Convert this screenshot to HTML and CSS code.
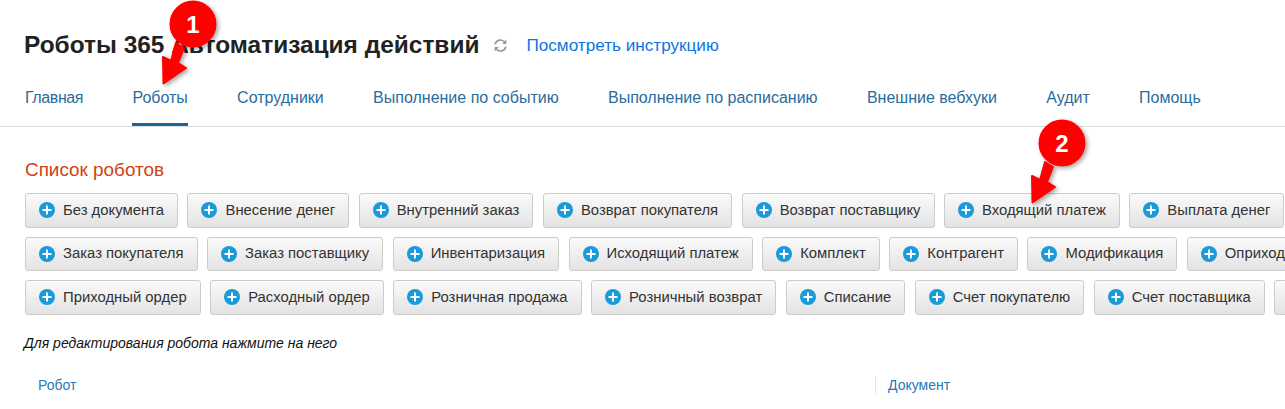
FILE: index.html
```html
<!DOCTYPE html>
<html lang="ru">
<head>
<meta charset="utf-8">
<title>Роботы 365</title>
<link rel="stylesheet" href="styles.css">
</head>
<body>
<svg width="0" height="0" class="defs"><defs>
<symbol id="plus" viewBox="0 0 16 16"><circle cx="8" cy="8" r="8" fill="#1b9ad9"/><path d="M8 3.5v9M3.5 8h9" stroke="#fff" stroke-width="2"/></symbol>
</defs></svg>
<header class="head">
  <div class="title-row">
    <h1 class="title">Роботы 365 Автоматизация действий</h1>
    <svg class="sync" viewBox="0 0 14 14" width="15" height="15"><path d="M2 6a5 5 0 0 1 9-2M12 8a5 5 0 0 1-9 2" fill="none" stroke="#999" stroke-width="1.6"/><path d="M12.5 1.5v4h-4zM1.5 12.5v-4h4z" fill="#999"/></svg>
    <a class="guide">Посмотреть инструкцию</a>
  </div>
  <nav class="nav">
    <a class="tab tab-first">Главная</a>
    <a class="tab active">Роботы</a>
    <a class="tab">Сотрудники</a>
    <a class="tab">Выполнение по событию</a>
    <a class="tab">Выполнение по расписанию</a>
    <a class="tab">Внешние вебхуки</a>
    <a class="tab">Аудит</a>
    <a class="tab">Помощь</a>
  </nav>
</header>
<main class="content">
  <h2 class="list-title">Список роботов</h2>
  <div class="rows">
    <div class="row">
      <button class="btn"><svg class="ic"><use href="#plus"/></svg>Без документа</button>
      <button class="btn"><svg class="ic"><use href="#plus"/></svg>Внесение денег</button>
      <button class="btn"><svg class="ic"><use href="#plus"/></svg>Внутренний заказ</button>
      <button class="btn"><svg class="ic"><use href="#plus"/></svg>Возврат покупателя</button>
      <button class="btn"><svg class="ic"><use href="#plus"/></svg>Возврат поставщику</button>
      <button class="btn"><svg class="ic"><use href="#plus"/></svg>Входящий платеж</button>
      <button class="btn"><svg class="ic"><use href="#plus"/></svg>Выплата денег</button>
    </div>
    <div class="row">
      <button class="btn"><svg class="ic"><use href="#plus"/></svg>Заказ покупателя</button>
      <button class="btn"><svg class="ic"><use href="#plus"/></svg>Заказ поставщику</button>
      <button class="btn"><svg class="ic"><use href="#plus"/></svg>Инвентаризация</button>
      <button class="btn"><svg class="ic"><use href="#plus"/></svg>Исходящий платеж</button>
      <button class="btn"><svg class="ic"><use href="#plus"/></svg>Комплект</button>
      <button class="btn"><svg class="ic"><use href="#plus"/></svg>Контрагент</button>
      <button class="btn"><svg class="ic"><use href="#plus"/></svg>Модификация</button>
      <button class="btn"><svg class="ic"><use href="#plus"/></svg>Оприходование</button>
    </div>
    <div class="row">
      <button class="btn"><svg class="ic"><use href="#plus"/></svg>Приходный ордер</button>
      <button class="btn"><svg class="ic"><use href="#plus"/></svg>Расходный ордер</button>
      <button class="btn"><svg class="ic"><use href="#plus"/></svg>Розничная продажа</button>
      <button class="btn"><svg class="ic"><use href="#plus"/></svg>Розничный возврат</button>
      <button class="btn"><svg class="ic"><use href="#plus"/></svg>Списание</button>
      <button class="btn"><svg class="ic"><use href="#plus"/></svg>Счет покупателю</button>
      <button class="btn"><svg class="ic"><use href="#plus"/></svg>Счет поставщика</button>
      <button class="btn btn-cut"></button>
    </div>
  </div>
  <p class="hint">Для редактирования робота нажмите на него</p>
  <div class="table-head">
    <div class="col col-robot">Робот</div>
    <div class="col col-doc">Документ</div>
  </div>
</main>
<svg class="callout callout-1" viewBox="0 0 70 90" width="70" height="90">
  <defs><filter id="sh" x="-30%" y="-30%" width="170%" height="170%"><feDropShadow dx="2" dy="2" stdDeviation="2" flood-color="#000" flood-opacity=".35"/></filter></defs>
  <g filter="url(#sh)" class="mark">
    <circle cx="33" cy="26" r="22.5"/>
    <path d="M16 45 L24 50 L18 65 L26 70 L3.5 85.5 L3 59 L11 63Z"/>
  </g>
  <text x="33" y="35" class="num">1</text>
</svg>
<svg class="callout callout-2" viewBox="0 0 70 90" width="70" height="90">
  <g filter="url(#sh)" class="mark">
    <circle cx="33" cy="26" r="22.5"/>
    <path d="M16 45 L24 50 L18 65 L26 70 L3.5 85.5 L3 59 L11 63Z"/>
  </g>
  <text x="33" y="35" class="num">2</text>
</svg>
</body>
</html>
```
FILE: styles.css
```css
html, body { margin: 0; padding: 0; }
body {
  width: 1285px;
  height: 409px;
  overflow: hidden;
  position: relative;
  background: #fff;
  font-family: "Liberation Sans", Arial, sans-serif;
  color: #333;
}
.defs { position: absolute; }
.head { border-bottom: 1px solid #ddd; height: 126px; }
.title-row { display: flex; align-items: center; height: 30px; padding: 30px 0 0 24px; }
.title { margin: 0; font-size: 24.45px; line-height: 30px; font-weight: 700; color: #222; }
.sync { margin-left: 14px; }
.guide { margin-left: 18px; font-size: 17.15px; color: #0d75e0; }
.nav { display: flex; gap: 49.3px; padding-left: 25px; margin-top: 15px; }
.tab { display: block; height: 51px; line-height: 46px; font-size: 16px; color: #2a6c9d; box-sizing: border-box; }
.tab-first { letter-spacing: -.4px; }
.active { border-bottom: 3px solid #1c6696; }
.content { padding: 0 0 0 25px; }
.list-title { margin: 0; padding-top: 32px; font-size: 18.9px; line-height: 21px; font-weight: 400; color: #cf4310; }
.rows { display: flex; flex-direction: column; gap: 9px; margin-top: 13px; }
.row { display: flex; gap: 9.5px; white-space: nowrap; }
.btn {
  display: flex;
  align-items: center;
  flex: none;
  height: 34.5px;
  padding: 0 13px 0 13px;
  border: 1px solid #ccc;
  border-radius: 3px;
  background: linear-gradient(#fafafa, #e3e3e3);
  font: 14.85px/1 "Liberation Sans", Arial, sans-serif;
  color: #333;
}
.btn-cut { width: 60px; }
.ic { width: 16px; height: 16px; margin-right: 8px; flex: none; }
.hint { margin: 20px 0 0 -1px; font-size: 14px; line-height: 16px; font-style: italic; color: #111; }
.table-head { display: flex; margin-top: 25px; font-size: 14px; line-height: 19px; color: #2a78b8; }
.col-robot { width: 850px; padding-left: 13px; box-sizing: border-box; }
.col-doc { border-left: 1px solid #e8e8e8; padding-left: 12px; }
.callout { position: absolute; }
.callout-1 { left: 160px; top: -2px; }
.callout-2 { left: 1029px; top: 117px; }
.mark { fill: #f00; stroke: #f00; stroke-width: 2; stroke-linejoin: round; }
.num { font-size: 24px; font-weight: 700; fill: #fff; text-anchor: middle; }
```
